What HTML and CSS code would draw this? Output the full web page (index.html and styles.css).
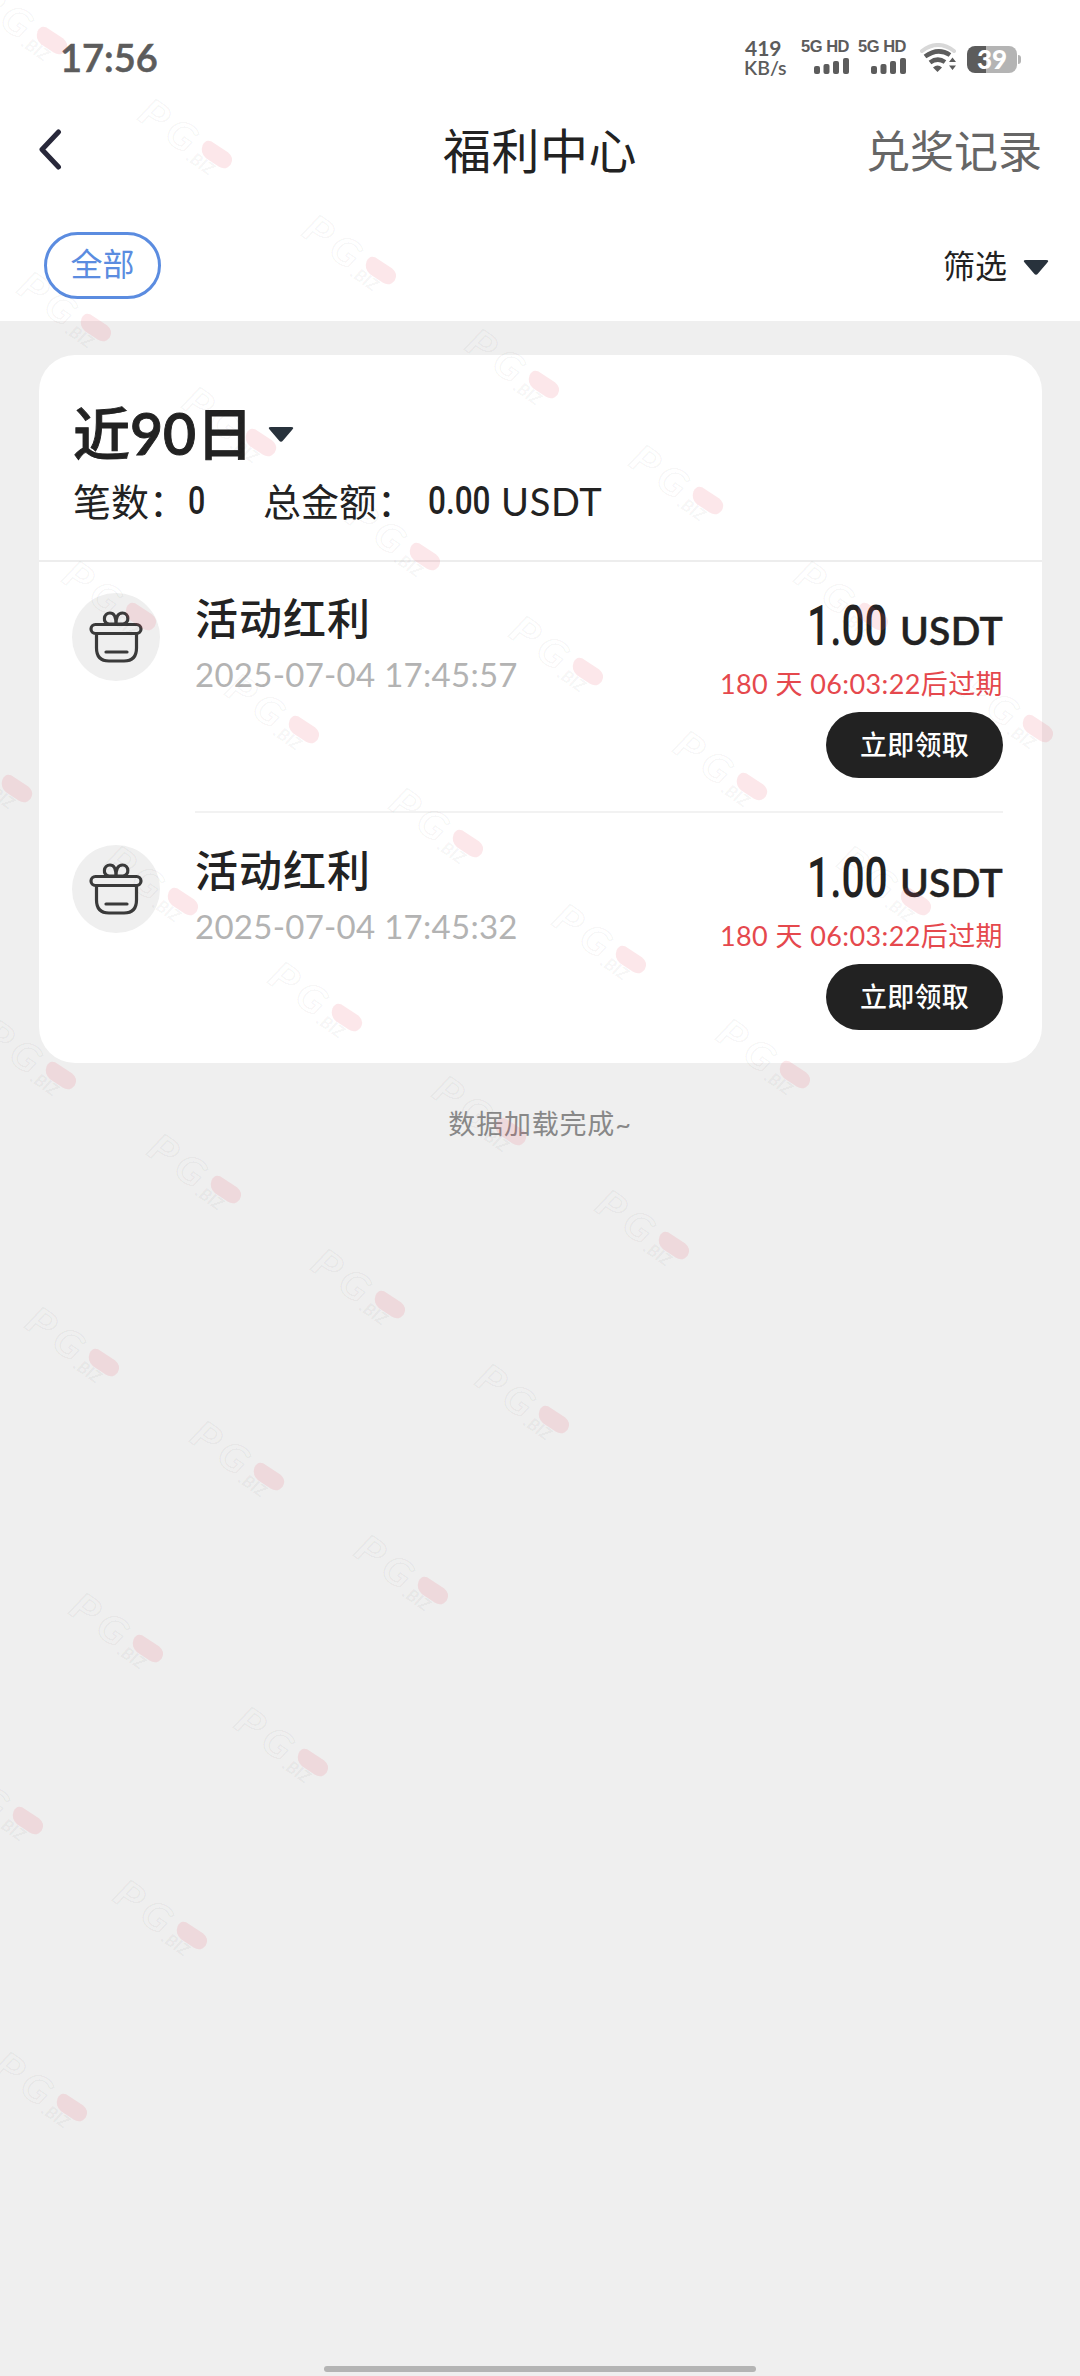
FILE: index.html
```
<!DOCTYPE html>
<html lang="zh-CN">
<head>
<meta charset="utf-8">
<title>福利中心</title>
<link rel="stylesheet" href="styles.css">
</head>
<body>
<div class="screen">
  <header class="top">
    <div class="status">
      <span class="clock">17:56</span>
      <div class="indicators">
        <div class="speed"><b>419</b><span>KB/s</span></div>
        <div class="signal">
          <span>5G HD</span>
          <svg width="35" height="16" viewBox="0 0 35 16"><rect x="0" y="8" width="6" height="8" rx="2"/><rect x="9.500" y="6" width="6" height="10" rx="2"/><rect x="19" y="3" width="6" height="13" rx="2"/><rect x="29" y="0" width="6" height="16" rx="2"/></svg>
        </div>
        <div class="signal">
          <span>5G HD</span>
          <svg width="35" height="16" viewBox="0 0 35 16"><rect x="0" y="8" width="6" height="8" rx="2"/><rect x="9.500" y="6" width="6" height="10" rx="2"/><rect x="19" y="3" width="6" height="13" rx="2"/><rect x="29" y="0" width="6" height="16" rx="2"/></svg>
        </div>
        <svg class="wifi" width="37" height="30" viewBox="0 0 37 30" fill="none">
          <path d="M2 8Q18 -4 34 8" stroke="#d8d8d8" stroke-width="4" stroke-linecap="round"/>
          <path d="M5 13.500Q18 4 30 12" stroke="#5c5c5c" stroke-width="4.500"/>
          <path d="M10 19.500Q17.500 14 25 19" stroke="#5c5c5c" stroke-width="4.500"/>
          <path d="M13 24.500Q17.500 20.500 22 24.500L17.500 29Z" fill="#5c5c5c"/>
          <path d="M29 19L32.500 14.500L36 19ZM29 22.500H36L32.500 27Z" fill="#5c5c5c"/>
        </svg>
        <div class="battery"><span>39</span></div>
      </div>
    </div>
    <nav class="bar">
      <svg class="back" width="24" height="41" viewBox="0 0 24 41"><path d="M20.500 3L4 20.500L20.500 38" fill="none" stroke="#28283a" stroke-width="5" stroke-linecap="round" stroke-linejoin="round"/></svg>
      <h1>福利中心</h1>
      <a class="records">兑奖记录</a>
    </nav>
    <div class="filters">
      <span class="pill">全部</span>
      <span class="filter">筛选<svg width="26" height="17" viewBox="0 0 26 17"><path d="M3 1H23Q27 1 24 4L15 14.500Q13 17 11 14.500L2 4Q-1 1 3 1Z" fill="#28323c"/></svg></span>
    </div>
  </header>

  <main class="card">
    <section class="summary">
      <h2><span>近<b>90</b>日</span><svg width="26" height="17" viewBox="0 0 26 17"><path d="M3 1H23Q27 1 24 4L15 14.500Q13 17 11 14.500L2 4Q-1 1 3 1Z" fill="#28323c"/></svg></h2>
      <p><span class="count-label">笔数：</span><span class="narrow count">0</span><span class="sum-label">总金额：</span><span class="narrow sum">0.00</span><span class="sum-unit">USDT</span></p>
    </section>
    <article class="item">
      <div class="icon"><svg width="54" height="52" viewBox="0 0 54 52"><use href="#gift"/></svg></div>
      <div class="body">
        <div class="info"><h3>活动红利</h3><time>2025-07-04 17:45:57</time></div>
        <div class="claim">
          <div class="amount"><span class="narrow big">1.00</span><span class="unit">USDT</span></div>
          <div class="expiry">180 天 06:03:22后过期</div>
          <button>立即领取</button>
        </div>
      </div>
    </article>
    <article class="item">
      <div class="icon"><svg width="54" height="52" viewBox="0 0 54 52"><use href="#gift"/></svg></div>
      <div class="body">
        <div class="info"><h3>活动红利</h3><time>2025-07-04 17:45:32</time></div>
        <div class="claim">
          <div class="amount"><span class="narrow big">1.00</span><span class="unit">USDT</span></div>
          <div class="expiry">180 天 06:03:22后过期</div>
          <button>立即领取</button>
        </div>
      </div>
    </article>
  </main>
  <p class="done">数据加载完成~</p>
  <div class="home"></div>

  <svg class="marks" width="1080" height="2376" viewBox="0 0 1080 2376">
    <defs>
      <g id="gift" fill="none" stroke="#3a3a3a" stroke-width="3.200" stroke-linejoin="round" stroke-linecap="round">
        <rect x="2" y="13.500" width="50" height="9" rx="4.500"/>
        <path d="M7.500 23V37Q7.500 50 20 50H35Q47.500 50 47.500 37V23M17 41H38"/>
        <path d="M27 13H20C13 12 14.500 2 21 2C25.500 2 27 6 27 13C27 6 29 2 33.500 2C40 2 41 12 34 13Z"/>
      </g>
      <g id="mark">
        <g transform="rotate(35)">
          <text class="mark-name" transform="translate(-86 17) scale(1.200 1)">P</text>
          <text class="mark-name" transform="translate(-53 18) scale(1.100 1)">G</text>
          <text class="mark-tld" x="-22" y="22">.BIZ</text>
        </g>
        <path class="mark-pill" d="M-11 -8H9Q18 -7 18 1Q17 9 9 9H-6Q-14 8 -16 0Q-17 -7 -11 -8Z" transform="rotate(33)"/>
      </g>
    </defs>
    <use href="#mark" x="51" y="40"/><use href="#mark" x="216" y="154"/><use href="#mark" x="380" y="270"/><use href="#mark" x="543" y="384"/><use href="#mark" x="707" y="500"/><use href="#mark" x="872" y="616"/><use href="#mark" x="1037" y="728"/>
    <use href="#mark" x="95" y="327"/><use href="#mark" x="260" y="442"/><use href="#mark" x="424" y="556"/><use href="#mark" x="587" y="671"/><use href="#mark" x="751" y="786"/><use href="#mark" x="915" y="901"/>
    <use href="#mark" x="140" y="616"/><use href="#mark" x="303" y="729"/><use href="#mark" x="467" y="843"/><use href="#mark" x="630" y="959"/><use href="#mark" x="794" y="1074"/>
    <use href="#mark" x="16" y="788"/><use href="#mark" x="182" y="901"/><use href="#mark" x="346" y="1017"/><use href="#mark" x="510" y="1131"/><use href="#mark" x="673" y="1245"/>
    <use href="#mark" x="60" y="1075"/><use href="#mark" x="225" y="1189"/><use href="#mark" x="389" y="1304"/><use href="#mark" x="553" y="1419"/>
    <use href="#mark" x="103" y="1362"/><use href="#mark" x="268" y="1476"/><use href="#mark" x="432" y="1590"/>
    <use href="#mark" x="147" y="1648"/><use href="#mark" x="312" y="1762"/>
    <use href="#mark" x="27" y="1820"/><use href="#mark" x="191" y="1935"/>
    <use href="#mark" x="71" y="2107"/>
  </svg>
</div>
</body>
</html>
```
FILE: styles.css
```
* { box-sizing: border-box; }
body, h1, h2, h3, p { margin: 0; }
h1, h2, h3 { font-weight: 400; }
body {
  background: #efefef;
  color: #222;
  font-family: Lato, "Noto Sans CJK SC", sans-serif;
}
svg { display: block; }
.screen {
  position: relative;
  display: flex;
  flex-direction: column;
  width: 1080px;
  height: 2376px;
  overflow: hidden;
}
.top { height: 321px; background: #fff; }

.status {
  display: flex;
  justify-content: space-between;
  height: 110px;
  padding: 33px 61px 0 60px;
  color: #5c5c5c;
}
.clock { font-size: 38px; font-weight: 600; line-height: 48px; -webkit-text-stroke: .6px #5c5c5c; }
.indicators { display: flex; align-items: flex-start; padding-top: 4px; }
.speed {
  display: flex;
  flex-direction: column;
  width: 57px;
  font-size: 21px;
  line-height: 22px;
}
.speed b { padding-left: 1px; }
.speed span { font-size: 19.500px; line-height: 18px; font-weight: 600; white-space: nowrap; }
.signal {
  display: flex;
  flex-direction: column;
  align-items: flex-end;
  width: 48px;
  margin-right: 9px;
  font: 700 16.500px/18px "Liberation Sans", sans-serif;
  letter-spacing: -.5px;
  white-space: nowrap;
}
.signal svg { margin-top: 3px; fill: #5c5c5c; }
.wifi { margin: 6px 10px 0 5px; }
.battery {
  position: relative;
  width: 50px;
  height: 27px;
  margin-top: 9px;
  margin-right: 2px;
  border-radius: 8px;
  background: linear-gradient(90deg, #5c5c5c 39%, #b4b4b4 39%);
  color: #fff;
  font-size: 26px;
  font-weight: 900;
  line-height: 27px;
  text-align: center;
}
.battery::after {
  content: "";
  position: absolute;
  right: -4px;
  top: 9px;
  width: 3px;
  height: 9px;
  border-radius: 0 3px 3px 0;
  background: #b4b4b4;
}

.bar {
  display: grid;
  grid-template-columns: 1fr auto 1fr;
  align-items: center;
  height: 82px;
  padding: 0 38px 0 38px;
}
.bar h1 { font-size: 48px; letter-spacing: .5px; line-height: 70px; }
.records { justify-self: end; color: #666; font-size: 44px; line-height: 64px; }
.back { margin-top: -3px; }

.filters {
  display: flex;
  justify-content: space-between;
  align-items: center;
  padding: 40px 31px 0 44px;
}
.pill {
  width: 117px;
  height: 67px;
  border: 3px solid #5b8ce0;
  border-radius: 34px;
  color: #5b8ce0;
  font-size: 32px;
  line-height: 58px;
  text-align: center;
}
.filter { display: flex; align-items: center; gap: 16px; color: #222; font-size: 32px; line-height: 48px; }
.filter svg { margin-top: 4px; }

.card {
  width: 1003px;
  height: 708px;
  margin: 34px 0 0 39px;
  border-radius: 36px;
  background: #fff;
}
.summary { height: 207px; padding: 36px 34px 0; border-bottom: 2px solid #ededed; }
.summary h2 {
  display: flex;
  align-items: center;
  gap: 17px;
  font-size: 57px;
  font-weight: 500;
  line-height: 84px;
  -webkit-text-stroke: .9px #222;
}
.summary h2 b { font-weight: 600; }
.summary h2 svg { margin: 2px 0 0 -2px; }
.summary p { display: flex; height: 54px; font-size: 38px; line-height: 52px; white-space: nowrap; }
.count-label { width: 115px; }
.sum-label { width: 165px; }
.narrow { font-family: Roboto, sans-serif; transform-origin: 0 50%; font-weight: 500; }
.count { width: 75px; transform: scaleX(.8); }
.sum { width: 73px; transform: scaleX(.83); }
.sum-unit { letter-spacing: .7px; }

.item { display: flex; height: 252px; padding: 31px 39px 0 33px; }
.icon {
  display: grid;
  place-items: center;
  flex: none;
  width: 88px;
  height: 88px;
  border-radius: 50%;
  background: #efefef;
}
.body {
  display: flex;
  justify-content: space-between;
  flex: 1;
  height: 220px;
  margin-left: 35px;
  border-bottom: 2px solid #f2f2f2;
}
.item:last-child .body { border: 0; }
.info { display: flex; flex-direction: column; }
.info h3 { font-size: 43px; font-weight: 500; letter-spacing: 1px; line-height: 51px; }
.info time { margin-top: 5px; color: #b3b3b3; font-size: 33px; letter-spacing: .28px; line-height: 50px; white-space: nowrap; }
.claim { display: flex; flex-direction: column; align-items: flex-end; }
.amount { display: flex; align-items: baseline; height: 68px; line-height: 66px; font-size: 39px; font-weight: 600; }
.unit { letter-spacing: .3px; -webkit-text-stroke: .4px #222; }
.big { width: 93px; font-size: 55px; transform: scaleX(.74); }
.expiry { height: 51px; color: #e5484d; font-size: 27px; letter-spacing: .4px; line-height: 46px; white-space: nowrap; }
button {
  width: 177px;
  height: 66px;
  padding: 0;
  border: 0;
  border-radius: 33px;
  background: #222;
  color: #fff;
  font: 500 27px/64px Lato, "Noto Sans CJK SC", sans-serif;
  letter-spacing: .3px;
}
.done { margin-top: 40px; color: #888; font-size: 27px; letter-spacing: .8px; line-height: 42px; text-align: center; }
.home { width: 432px; height: 6px; margin: auto auto 4px; border-radius: 3px; background: #b4b4b4; }

.marks { position: absolute; left: 0; top: 0; pointer-events: none; }
.mark-name { font: italic 700 38px Lato, sans-serif; fill: #000; fill-opacity: .012; stroke: #000; stroke-opacity: .04; stroke-width: 1.500px; }
.mark-tld { font: italic 700 17px Lato, sans-serif; fill: #000; fill-opacity: .05; }
.mark-pill { fill: #e85468; fill-opacity: .14; }
```
